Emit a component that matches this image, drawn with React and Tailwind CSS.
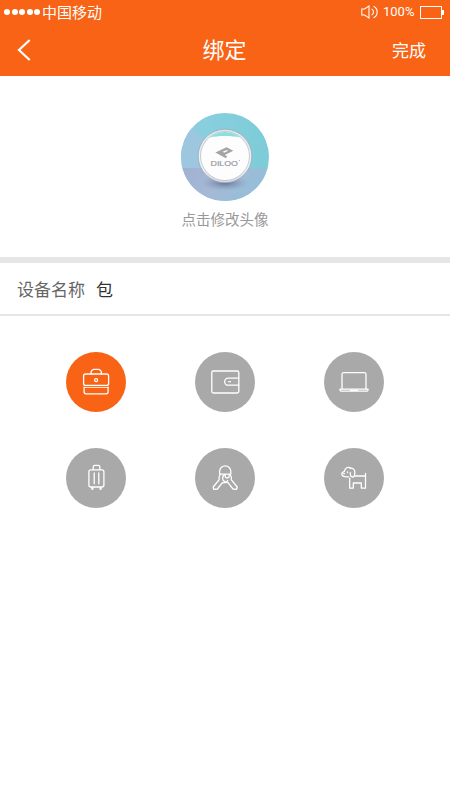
import React from "react";

const BagIcon = () => (
  <>
    <rect x="17.6" y="22" width="25" height="11.4" rx="2" />
    <path d="M25 21.800v-1.200a3.200 3.200 0 0 1 3.200-3.200h4a3.200 3.200 0 0 1 3.200 3.200v1.200" />
    <path d="M18.100 35.200v4.600a2 2 0 0 0 2 2h20a2 2 0 0 0 2-2v-4.600" />
    <path d="M18.100 35.400h24" strokeWidth="0.9" />
    <circle cx="30.100" cy="28.200" r="1.500" />
  </>
);

const WalletIcon = () => (
  <>
    <rect x="16.8" y="19" width="27" height="22" rx="1.5" />
    <path d="M43.8 26.2H33.200a3.500 3.500 0 0 0 0 7h10.600" />
    <path d="M33.800 29.700h1.600" />
  </>
);

const LaptopIcon = () => (
  <>
    <path d="M18 36.700V22.400a1.800 1.800 0 0 1 1.800-1.800h20.400a1.800 1.800 0 0 1 1.800 1.800v14.300" />
    <path d="M16 37.200h28v.8a1.200 1.200 0 0 1-1.200 1.200H17.200a1.200 1.200 0 0 1-1.200-1.200z" />
    <path d="M26.500 38.200h7" strokeWidth="1.5" />
  </>
);

const SuitcaseIcon = () => (
  <>
    <rect x="22.9" y="21.8" width="15" height="17.2" rx="2" />
    <path d="M27.200 21.600v-2.600a1.600 1.600 0 0 1 1.600-1.600h3.400a1.600 1.600 0 0 1 1.600 1.600v2.600" />
    <path d="M28.200 25v10.800M32.800 25v10.800" />
    <path d="M26.400 39.800v1.200M34.600 39.800v1.200" strokeWidth="2.2" />
  </>
);

const KeysIcon = () => (
  <>
    <path d="M24.600 26.200v-2.800a5.600 5.600 0 0 1 11.200 0v2.800z" />
    <path d="M25.400 26.600c-1.400 1.500-1.800 3.200-1.200 5l-6 7.400.6 2.400 3.600-.4 5-6.400c2.200.6 4.200-.4 5.300-2" />
    <path d="M35 26.600c1.400 1.500 1.800 3.200 1.200 5l6 7.400-.6 2.400-3.600-.4-5-6.400c-2.300.2-4.100-.9-5-2.800-.8-2 0-4.100 1.600-5.200" />
    <path d="M30.300 26.800v2.200l1.800 1.200 2-1.300v-1.900" />
  </>
);

const DogIcon = () => (
  <>
    <path d="M25.700 30.200V40.200h3.600v-5.200h8v5.200h4.200V25.400" />
    <path d="M30.800 28h10.700" />
    <path d="M26.900 20.400c-1.300-1.500-4.500-1.400-5.700.8l-.8 2.200c-1.600.6-2.800 1.300-2.600 2.800.3 2.200 3 3 7 2.600" />
    <path d="M26.100 20.400c2.200-.8 4.400.6 4.700 3.300.2 2.500-.5 5-2.100 5.300-1.700.2-2.500-1.600-2.400-4.300" />
    <path d="M23.500 23.800v.7M19.700 25.600h.8" />
  </>
);

const categories = [
  { name: "包", Icon: BagIcon },
  { name: "钱包", Icon: WalletIcon },
  { name: "电脑", Icon: LaptopIcon },
  { name: "行李箱", Icon: SuitcaseIcon },
  { name: "钥匙", Icon: KeysIcon },
  { name: "宠物", Icon: DogIcon },
];

const StatusBar = () => (
  <div className="flex h-6 items-center justify-between pl-1 pr-[6px] text-[15px] leading-6">
    <div className="flex items-center">
      <div className="flex gap-[1.5px]">
        {[0, 1, 2, 3, 4].map((dot) => (
          <span key={dot} className="size-[6px] rounded-full bg-white" />
        ))}
      </div>
      <span className="ml-[2px]">中国移动</span>
    </div>
    <div className="flex items-center">
      <svg
        className="h-4 w-[18px]"
        viewBox="0 0 18 16"
        fill="none"
        stroke="white"
        strokeWidth="1.1"
      >
        <path d="M.8 5h2.800L8 2v12l-4.400-3H.8z" />
        <path d="M10.600 5a3.300 3.300 0 0 1 0 6M12.600 2.200a6.500 6.500 0 0 1 0 11.600" />
      </svg>
      <span className="ml-1 w-[31px] font-['Roboto',sans-serif] text-[13px] whitespace-nowrap">
        100%
      </span>
      <div className="ml-[6px] h-[13px] w-[22px] border border-white" />
      <div className="h-[5px] w-[2px] bg-white" />
    </div>
  </div>
);

const DeviceAvatar = () => (
  <svg className="size-[88px]" viewBox="0 0 88 88">
    <defs>
      <clipPath id="avatar">
        <circle cx="44" cy="44" r="44" />
      </clipPath>
      <linearGradient id="floor" x1="0" y1="0" x2="1" y2="0.3">
        <stop offset="0" stopColor="#a0b0d2" />
        <stop offset="0.5" stopColor="#a5b9d6" />
        <stop offset="1" stopColor="#94bfd9" />
      </linearGradient>
      <linearGradient id="wall" x1="0" y1="0" x2="1" y2="0">
        <stop offset="0" stopColor="#8ccfe2" />
        <stop offset="1" stopColor="#7dccd8" />
      </linearGradient>
      <radialGradient id="shadow">
        <stop offset="0" stopColor="#59698a" stopOpacity="0.85" />
        <stop offset="1" stopColor="#8398b8" stopOpacity="0" />
      </radialGradient>
      <linearGradient id="rim" x1="0" y1="0" x2="0" y2="1">
        <stop offset="0" stopColor="#dfe7eb" />
        <stop offset="0.7" stopColor="#f2f4f7" />
        <stop offset="1" stopColor="#d4d8e0" />
      </linearGradient>
      <clipPath id="face">
        <circle cx="44" cy="43" r="24" />
      </clipPath>
    </defs>
    <g clipPath="url(#avatar)">
      <path fill="url(#wall)" d="M0 0h88v88H0z" />
      <path fill="#9dc6df" d="M0 0l8 12 15 14v32H0z" />
      <path fill="url(#floor)" d="M0 55h88v33H0z" />
      <ellipse cx="44" cy="70" rx="24" ry="8" fill="url(#shadow)" />
      <circle
        cx="44"
        cy="43"
        r="26.800"
        fill="url(#rim)"
        stroke="#98a5ae"
        strokeWidth="0.7"
      />
      <circle cx="44" cy="43" r="24.500" fill="#fdfdfe" stroke="#a6afb8" strokeWidth="0.6" />
      <path
        clipPath="url(#face)"
        fill="#8bdfdf"
        d="M29 17h30v7.500c-7-2-23-2-30 0z"
      />
      {/* Brand mark on the device */}
      <path
        fill="none"
        stroke="#a3a4a7"
        strokeWidth="2.400"
        d="M45.500 44.300L37 39.600l8.500-4 4.200 2.200-6.500 3.200-3-1.600"
      />
      <text
        x="29.500"
        y="52.500"
        textLength="27.500"
        lengthAdjust="spacingAndGlyphs"
        fill="#999b9f"
        stroke="#999b9f"
        strokeWidth="0.2"
        className="font-['Liberation_Sans',sans-serif] text-[7.500px]"
      >
        DILOO
      </text>
      <circle cx="58.300" cy="47.600" r="0.6" fill="#a3a4a7" />
    </g>
  </svg>
);

const App = () => {
  const [selected, setSelected] = React.useState(0);

  return (
    <div className="min-h-screen w-full bg-white font-['Noto_Sans_CJK_SC',sans-serif]">
      {/* Header */}
      <header className="h-[76px] bg-[#f96315] text-white">
        <StatusBar />
        <div className="grid h-[52px] grid-cols-3 items-center pl-[17px] pr-6">
          <button aria-label="返回" className="justify-self-start">
            <svg
              className="h-6 w-[14px]"
              viewBox="0 0 14 24"
              fill="none"
              stroke="white"
              strokeWidth="2.2"
            >
              <path d="M12.700 2L2 12l10.700 10" />
            </svg>
          </button>
          <h1 className="translate-x-[3px] pb-1 text-center text-[22px] leading-8">
            绑定
          </h1>
          <button className="justify-self-end text-[17px]">完成</button>
        </div>
      </header>

      {/* Avatar */}
      <section className="flex h-[181px] flex-col items-center pt-[37px]">
        <DeviceAvatar />
        <p className="mt-1.5 text-[14.500px] leading-6 text-[#999]">点击修改头像</p>
      </section>

      {/* Device name */}
      <section className="flex h-[59px] items-center border-t-[6px] border-b-2 border-t-[#e6e6e6] border-b-[#e6e6e6] pl-[17px] text-[17px]">
        <span className="text-[#666]">设备名称</span>
        <span className="ml-[11px] text-[#333]">包</span>
      </section>

      {/* Categories */}
      <div className="grid grid-cols-3 justify-between gap-x-[69px] gap-y-9 px-[66px] pt-[36px]">
        {categories.map(({ name, Icon }, index) => (
          <button
            key={name}
            aria-label={name}
            onClick={() => setSelected(index)}
            className={`size-[60px] rounded-full ${
              selected === index ? "bg-[#f96315]" : "bg-[#a9a9a9]"
            }`}
          >
            <svg
              className="size-[60px]"
              viewBox="0 0 60 60"
              fill="none"
              stroke="white"
              strokeWidth="1.3"
              strokeLinecap="round"
              strokeLinejoin="round"
            >
              <Icon />
            </svg>
          </button>
        ))}
      </div>
    </div>
  );
};

export default App;
